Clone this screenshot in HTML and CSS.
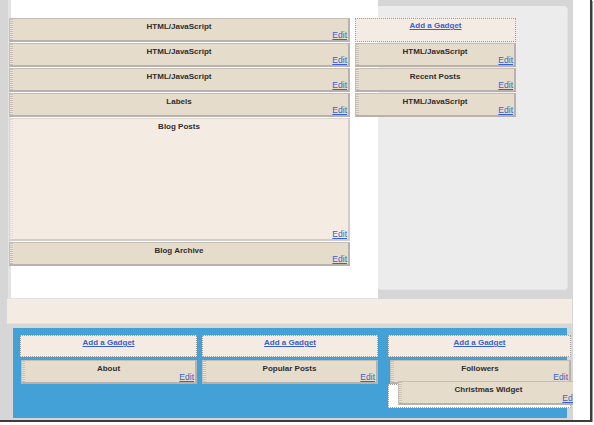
FILE: index.html
```html
<!DOCTYPE html>
<html>
<head>
<meta charset="utf-8">
<link rel="stylesheet" href="styles.css">
</head>
<body>
<div class="screen">
  <div class="canvas">
    <div class="top">
      <div class="top-bg">
        <div class="main-bg"></div>
        <div class="side-bg"><div class="side-panel"></div></div>
      </div>
      <div class="top-widgets">
        <div class="col main-col">
          <div class="widget"><div class="w-title">HTML/JavaScript</div><a class="w-edit" href="#">Edit</a></div>
          <div class="widget"><div class="w-title">HTML/JavaScript</div><a class="w-edit" href="#">Edit</a></div>
          <div class="widget"><div class="w-title">HTML/JavaScript</div><a class="w-edit" href="#">Edit</a></div>
          <div class="widget"><div class="w-title">Labels</div><a class="w-edit" href="#">Edit</a></div>
          <div class="widget posts"><div class="w-title">Blog Posts</div><a class="w-edit" href="#">Edit</a></div>
          <div class="widget"><div class="w-title">Blog Archive</div><a class="w-edit" href="#">Edit</a></div>
        </div>
        <div class="col side-col">
          <div class="add-gadget"><a href="#">Add a Gadget</a></div>
          <div class="widget"><div class="w-title">HTML/JavaScript</div><a class="w-edit" href="#">Edit</a></div>
          <div class="widget"><div class="w-title">Recent Posts</div><a class="w-edit" href="#">Edit</a></div>
          <div class="widget"><div class="w-title">HTML/JavaScript</div><a class="w-edit" href="#">Edit</a></div>
        </div>
      </div>
    </div>
    <div class="band"></div>
    <div class="footer">
      <div class="fcol c1">
        <div class="add-gadget small"><a href="#">Add a Gadget</a></div>
        <div class="widget about"><div class="w-title">About</div><a class="w-edit" href="#">Edit</a></div>
      </div>
      <div class="fcol c2">
        <div class="add-gadget small"><a href="#">Add a Gadget</a></div>
        <div class="widget"><div class="w-title">Popular Posts</div><a class="w-edit" href="#">Edit</a></div>
      </div>
      <div class="fcol c3">
        <div class="add-gadget small"><a href="#">Add a Gadget</a></div>
        <div class="widget followers"><div class="w-title">Followers</div><a class="w-edit" href="#">Edit</a></div>
        <div class="placeholder">
          <div class="widget dragging"><div class="w-title">Christmas Widget</div><a class="w-edit" href="#">Edit</a></div>
        </div>
      </div>
    </div>
  </div>
</div>
</body>
</html>
```

FILE: styles.css
```css
html, body {
  margin: 0;
  padding: 0;
  background: #ffffff;
}

body {
  font-family: "Liberation Sans", Arial, sans-serif;
}

.screen {
  width: 590px;
  height: 420px;
  border-right: 2px solid #3c3c3c;
  border-bottom: 2px solid #3c3c3c;
  box-shadow: 1px 1px 0 #a0a0a0;
  background: #ffffff;
}

.canvas {
  width: 573px;
  height: 420px;
  background: #d6d6d6;
  overflow: hidden;
  display: flex;
  flex-direction: column;
}

/* ---------- top area ---------- */
.top {
  display: grid;
  height: 299px;
  flex: none;
}

.top-bg,
.top-widgets {
  grid-area: 1 / 1;
}

.top-bg {
  display: flex;
  padding-left: 11px;
}

.main-bg {
  width: 367px;
  height: 298px;
  background: #ffffff;
  border-bottom: 1px solid #e2e2e2;
  box-shadow: -3px 0 0 #e3e3e3;
}

.side-bg {
  flex: 1;
  padding: 6px 6px 10px 0;
}

.side-panel {
  height: 100%;
  background: #ececec;
  border-radius: 0 3px 3px 0;
  box-shadow: 1px 1px 0 #e4e4e4;
}

.top-widgets {
  display: flex;
  align-items: flex-start;
  padding: 18px 0 0 9px;
  gap: 5px;
}

.col {
  display: flex;
  flex-direction: column;
  gap: 1px;
}

.main-col {
  width: 341px;
}

.side-col {
  width: 161px;
}

/* ---------- widgets ---------- */
.widget {
  box-sizing: border-box;
  height: 24px;
  display: flex;
  flex-direction: column;
  padding: 3px 1px 1px 1px;
  background: repeating-linear-gradient(to bottom, #c9c0b1 0 1px, #ebe3d6 1px 2px) left top / 3px 100% no-repeat, #e6dccb;
  border: 1px solid #c6beb5;
  border-right: 2px solid #b8b1ae;
  border-bottom: 2px solid #b8b1ae;
  text-align: center;
}

.w-title {
  font-size: 8px;
  line-height: 9px;
  font-weight: bold;
  color: #2e2e2e;
  white-space: nowrap;
}

.w-edit {
  margin-top: auto;
  align-self: flex-end;
  font-size: 8.5px;
  line-height: 8px;
  color: #3a60c9;
  text-decoration: underline;
}

.widget.posts {
  height: 123px;
  background: repeating-linear-gradient(to bottom, #e2dbd1 0 1px, #f6f0e8 1px 2px) left top / 3px 100% no-repeat, #f4ece3;
  border-color: #dcd6cf;
  border-right-color: #d2cdca;
  border-bottom-color: #d2cdca;
}

.add-gadget {
  box-sizing: border-box;
  height: 24px;
  padding-top: 2px;
  background: #f4ece3;
  border: 1px dotted #9f9f9f;
  text-align: center;
  font-size: 8px;
  line-height: 9px;
}

.add-gadget a {
  font-weight: bold;
  color: #3a60c9;
  text-decoration: underline;
}

.add-gadget.small {
  height: 22px;
}

/* ---------- band + footer ---------- */
.band {
  flex: none;
  height: 24px;
  margin-left: 7px;
  margin-right: 1px;
  background: #f4ece3;
  border-bottom: 1px solid #e4e4e4;
}

.footer {
  flex: none;
  box-sizing: border-box;
  width: 554px;
  height: 90px;
  margin: 4px 0 0 13px;
  padding: 7px 0 0 7px;
  background: #43a1d7;
  display: flex;
  align-items: flex-start;
}

.fcol {
  display: flex;
  flex-direction: column;
  flex: none;
  gap: 3px;
}

.c1 {
  width: 177px;
}

.c1 .about {
  margin-left: 1px;
}

.c2 {
  width: 176px;
  margin-left: 5px;
}

.c3 {
  width: 183px;
  margin-left: 10px;
}

.c3 .followers {
  margin-left: 2px;
}

.placeholder {
  position: relative;
  box-sizing: border-box;
  height: 24px;
  margin-top: -3px;
  background: #ffffff;
  border: 1px dotted #9f9f9f;
}

.widget.dragging {
  position: absolute;
  top: -4px;
  left: 9px;
  width: 182px;
}
```
